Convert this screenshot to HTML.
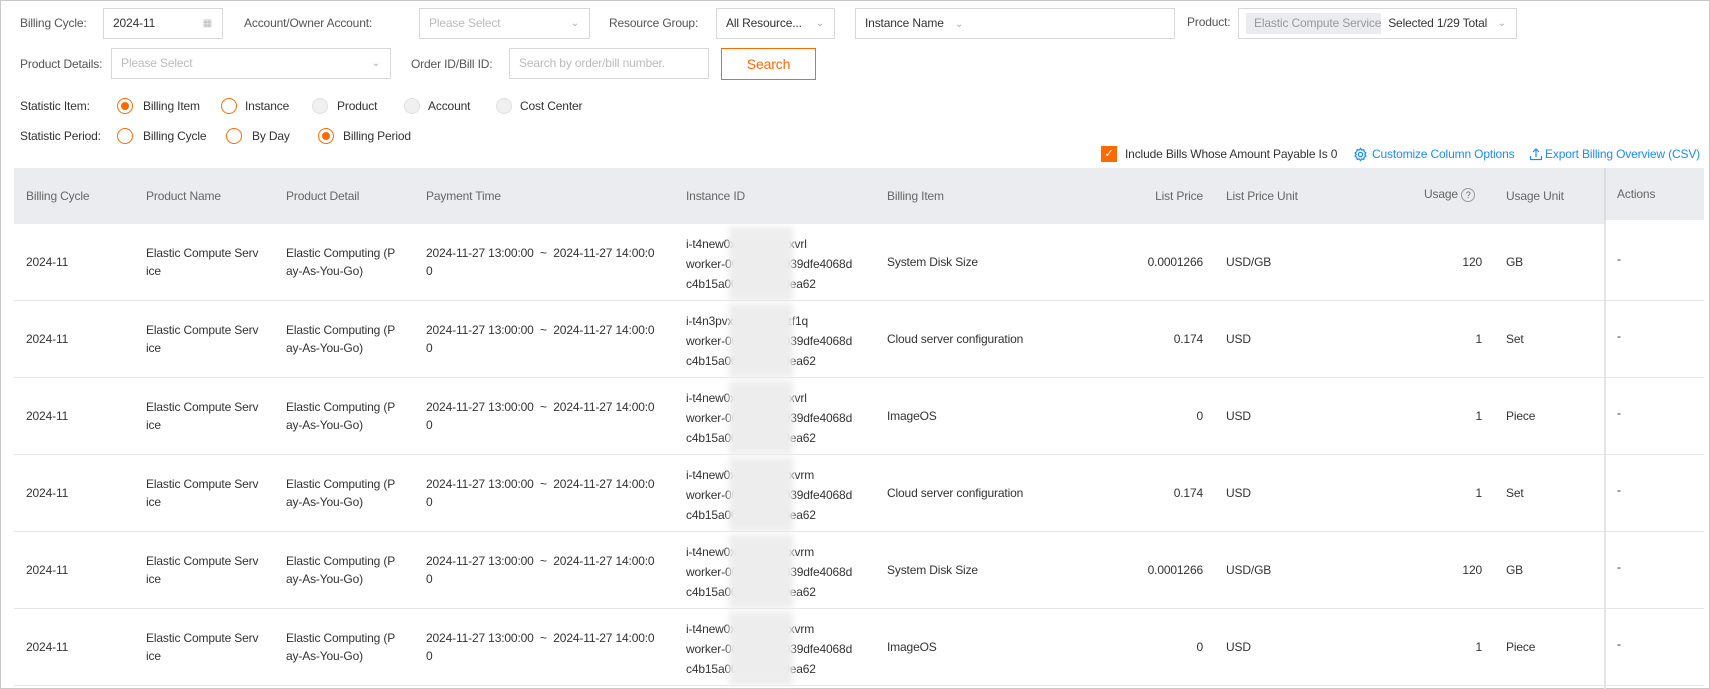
<!DOCTYPE html>
<html><head><meta charset="utf-8"><style>
*{margin:0;padding:0;box-sizing:border-box}
body{width:1710px;height:689px;overflow:hidden;background:#fff;font-family:"Liberation Sans",Arial,sans-serif;font-size:12px;color:#333;position:relative;letter-spacing:-0.15px}
.frame{position:absolute;left:0;top:0;width:1710px;height:689px;border:1px solid #c8c8c8}
.a{position:absolute;white-space:nowrap}
.lbl{color:#555}
.box{position:absolute;border:1px solid #d7d8da;background:#fff;height:31px;line-height:29px;padding-left:9px;white-space:nowrap;overflow:hidden}
.ph{color:#bbb}
.chev{position:absolute;right:10px;top:0;color:#aaa;font-size:10px}
.radio{position:absolute;width:16px;height:16px;border-radius:50%;border:1px solid #ff6a00;background:#fff}
.radio.on::after{content:"";position:absolute;left:3px;top:3px;width:8px;height:8px;border-radius:50%;background:#ff6a00}
.radio.dis{border-color:#e0e0e0;background:#f0f0f0}
.th{position:absolute;top:168px;height:56px;background:#ebecef}
.hd{color:#666;top:189px}
.row{position:absolute;left:14px;width:1690px;height:77px;border-bottom:1px solid #e6e6e6}
.blur{position:absolute;left:729px;width:64px;background:#ededed;filter:blur(3px)}
</style></head><body>
<div class="frame"></div>

<div class="a lbl" style="left:20px;top:16px">Billing Cycle:</div>
<div class="box" style="left:103px;top:8px;width:120px">2024-11<span class="chev" style="color:#bbb">▦</span></div>
<div class="a lbl" style="left:244px;top:16px">Account/Owner Account:</div>
<div class="box ph" style="left:419px;top:8px;width:171px">Please Select<span class="chev">⌄</span></div>
<div class="a lbl" style="left:609px;top:16px">Resource Group:</div>
<div class="box" style="left:716px;top:8px;width:119px">All Resource...<span class="chev">⌄</span></div>
<div class="box" style="left:855px;top:8px;width:320px">Instance Name <span style="color:#aaa;font-size:10px;margin-left:8px">⌄</span></div>
<div class="a lbl" style="left:1187px;top:15px">Product:</div>
<div class="box" style="left:1238px;top:8px;width:279px;padding-left:7px"><span style="display:inline-block;background:#ebecef;color:#999;height:21px;line-height:21px;padding:0 8px;width:135px;overflow:hidden;vertical-align:middle;white-space:nowrap">Elastic Compute Service</span> <span style="margin-left:4px">Selected 1/29 Total</span><span class="chev">⌄</span></div>

<div class="a lbl" style="left:20px;top:57px">Product Details:</div>
<div class="box ph" style="left:111px;top:48px;width:280px">Please Select<span class="chev">⌄</span></div>
<div class="a lbl" style="left:411px;top:57px">Order ID/Bill ID:</div>
<div class="box ph" style="left:509px;top:48px;width:200px">Search by order/bill number.</div>
<div class="a" style="left:721px;top:48px;width:95px;height:32px;border:1px solid #ff6a00;color:#ff6a00;font-size:14px;text-align:center;line-height:30px">Search</div>

<div class="a" style="left:20px;top:99px">Statistic Item:</div>
<div class="radio on" style="left:117px;top:98px"></div><div class="a" style="left:143px;top:99px">Billing Item</div>
<div class="radio" style="left:221px;top:98px"></div><div class="a" style="left:245px;top:99px">Instance</div>
<div class="radio dis" style="left:312px;top:98px"></div><div class="a" style="left:337px;top:99px">Product</div>
<div class="radio dis" style="left:404px;top:98px"></div><div class="a" style="left:428px;top:99px">Account</div>
<div class="radio dis" style="left:496px;top:98px"></div><div class="a" style="left:520px;top:99px">Cost Center</div>

<div class="a" style="left:20px;top:129px">Statistic Period:</div>
<div class="radio" style="left:117px;top:128px"></div><div class="a" style="left:143px;top:129px">Billing Cycle</div>
<div class="radio" style="left:226px;top:128px"></div><div class="a" style="left:252px;top:129px">By Day</div>
<div class="radio on" style="left:318px;top:128px"></div><div class="a" style="left:343px;top:129px">Billing Period</div>

<div class="a" style="left:1101px;top:146px;width:16px;height:16px;background:#ff6a00;color:#fff;font-size:11px;text-align:center;line-height:16px">✓</div>
<div class="a" style="left:1125px;top:147px">Include Bills Whose Amount Payable Is 0</div>
<svg class="a" style="left:1353px;top:147px" width="15" height="15" viewBox="0 0 16 16" fill="none" stroke="#1a8cff" stroke-width="1.3"><circle cx="8" cy="8" r="2.3"/><path d="M8 1.5l1.3 1.8 2.2-.5.5 2.2 1.8 1.3-1.2 1.7 1.2 1.7-1.8 1.3-.5 2.2-2.2-.5L8 14.5l-1.3-1.8-2.2.5-.5-2.2L2.2 9.7 3.4 8 2.2 6.3 4 5l.5-2.2 2.2.5z"/></svg>
<div class="a" style="left:1372px;top:147px;color:#1a8cff">Customize Column Options</div>
<svg class="a" style="left:1529px;top:147px" width="14" height="14" viewBox="0 0 14 14" fill="none" stroke="#1a8cff" stroke-width="1.2"><path d="M7 10V2M4 5l3-3 3 3M1.5 9v3.5h11V9"/></svg>
<div class="a" style="left:1545px;top:147px;color:#1a8cff">Export Billing Overview (CSV)</div>

<div class="th" style="left:14px;width:1590px"></div>
<div class="th" style="left:1604px;width:100px;height:52px;background:#ebecef;border-left:2px solid #dcdde0"></div>
<div class="a hd" style="left:26px">Billing Cycle</div>
<div class="a hd" style="left:146px">Product Name</div>
<div class="a hd" style="left:286px">Product Detail</div>
<div class="a hd" style="left:426px">Payment Time</div>
<div class="a hd" style="left:686px">Instance ID</div>
<div class="a hd" style="left:887px">Billing Item</div>
<div class="a hd" style="left:1150px;width:53px;text-align:right">List Price</div>
<div class="a hd" style="left:1226px">List Price Unit</div>
<div class="a hd" style="left:1424px;top:187px">Usage <span style="display:inline-block;width:14px;height:14px;border:1px solid #999;border-radius:50%;font-size:9px;text-align:center;line-height:12px;vertical-align:middle">?</span></div>
<div class="a hd" style="left:1506px">Usage Unit</div>
<div class="a hd" style="left:1617px;top:187px">Actions</div>
<div class="a" style="left:1604px;top:220px;width:2px;height:469px;background:#e3e4e6"></div>

<div id="rows"></div>
<script>
var d=[["xvrl","System Disk Size","0.0001266","USD/GB","120","GB"],["zf1q","Cloud server configuration","0.174","USD","1","Set"],["xvrl","ImageOS","0","USD","1","Piece"],["xvrm","Cloud server configuration","0.174","USD","1","Set"],["xvrm","System Disk Size","0.0001266","USD/GB","120","GB"],["xvrm","ImageOS","0","USD","1","Piece"]];
var h="";
d.forEach(function(r,i){var t=224+i*77;var c=t+38;
var pre=i==1?"i-t4n3pv":"i-t4new0";
h+='<div class="row" style="top:'+t+'px"></div>';
h+='<div class="a" style="left:26px;top:'+(c-7)+'px">2024-11</div>';
h+='<div class="a" style="left:146px;top:'+(c-18)+'px;line-height:18px">Elastic Compute Serv<br>ice</div>';
h+='<div class="a" style="left:286px;top:'+(c-18)+'px;line-height:18px">Elastic Computing (P<br>ay-As-You-Go)</div>';
h+='<div class="a" style="left:426px;top:'+(c-18)+'px;line-height:18px">2024-11-27 13:00:00 &nbsp;~ &nbsp;2024-11-27 14:00:0<br>0</div>';
h+='<div class="a" style="left:686px;top:'+(c-28)+'px;line-height:20px">'+pre+'xxxxxxxxxx'+r[0]+'<br>worker-000000000039dfe4068d<br>c4b15a0000000000ea62</div>';
h+='<div class="blur" style="top:'+(t+3)+'px;height:73px"></div>';
h+='<div class="a" style="left:887px;top:'+(c-7)+'px">'+r[1]+'</div>';
h+='<div class="a" style="left:1103px;width:100px;text-align:right;top:'+(c-7)+'px">'+r[2]+'</div>';
h+='<div class="a" style="left:1226px;top:'+(c-7)+'px">'+r[3]+'</div>';
h+='<div class="a" style="left:1400px;width:82px;text-align:right;top:'+(c-7)+'px">'+r[4]+'</div>';
h+='<div class="a" style="left:1506px;top:'+(c-7)+'px">'+r[5]+'</div>';
h+='<div class="a" style="left:1617px;top:'+(c-10)+'px">-</div>';
});
document.getElementById("rows").innerHTML=h;
</script>
</body></html>
